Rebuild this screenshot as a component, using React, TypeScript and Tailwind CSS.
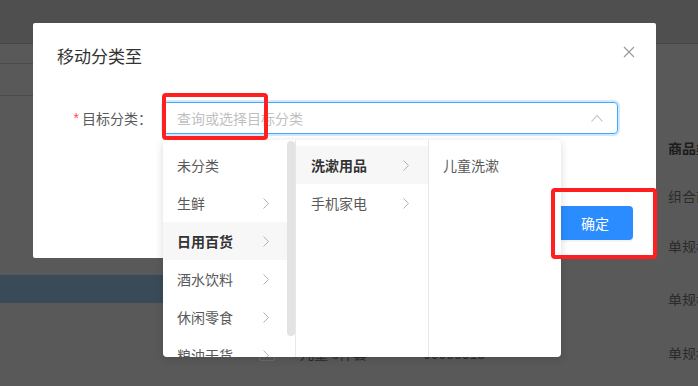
import React from 'react';

const FONT = "font-['Noto_Sans_CJK_SC','Noto_Sans',sans-serif]";

const firstLevel = [
    { name: "未分类", hasChildren: false },
    { name: "生鲜", hasChildren: true },
    { name: "日用百货", hasChildren: true, active: true },
    { name: "酒水饮料", hasChildren: true },
    { name: "休闲零食", hasChildren: true },
    { name: "粮油干货", hasChildren: true },
];

const secondLevel = [
    { name: "洗漱用品", hasChildren: true, active: true },
    { name: "手机家电", hasChildren: true },
];

const tableRows = [
    { name: "", code: "", type: "组合商品", h: "h-[48px]" },
    { name: "", code: "", type: "单规格商品", h: "h-[52px]" },
    { name: "", code: "", type: "单规格商品", h: "h-[54px]" },
    { name: "儿童 6件套", code: "00000013", type: "单规格商品", h: "h-[54px]" },
];

function ChevronRight() {
    return (
        <svg width="6" height="11" viewBox="0 0 6 11" fill="none">
            <polyline points="0.5,0.5 5.5,5.5 0.5,10.5" stroke="#b3b3b3" strokeWidth="1" />
        </svg>
    );
}

function MenuItem({ name, hasChildren, active, pad }: { name: string; hasChildren?: boolean; active?: boolean; pad: string }) {
    return (
        <div
            className={`flex h-[38px] items-center justify-between ${pad} ${active ? "bg-[#f7f7f7] font-semibold text-[#333]" : "text-[#595959]"}`}
        >
            <span className="text-[14px] leading-none">{name}</span>
            {hasChildren && <ChevronRight />}
        </div>
    );
}

export default function App() {
    return (
        <div className={`relative h-[386px] w-[698px] overflow-hidden bg-[#595959] ${FONT}`}>
            {/* page behind the mask */}
            <div className="flex h-full flex-col">
                <div className="h-[44px] shrink-0 border-b border-[#474747] bg-[#4f4f4f]" />
                <div className="flex flex-1">
                    <aside className="flex w-[210px] shrink-0 flex-col">
                        <div className="h-[20px] border-b border-[#4b4b4b]" />
                        <div className="h-[32px] border-b border-[#4b4b4b]" />
                        <div className="mt-[179px] h-[28px] bg-[#394b59]" />
                    </aside>
                    <main className="flex-1 pt-[80px] text-[14px] leading-none text-[#2b2b2b]">
                        <div className="flex h-[48px] items-center font-semibold text-[#1c1c1c]">
                            <div className="w-[90px] pl-[49px]" />
                            <div className="w-[123px]">商品名称</div>
                            <div className="w-[245px]">商品编码</div>
                            <div className="flex-1 overflow-hidden whitespace-nowrap">商品类型</div>
                        </div>
                        {tableRows.map((row, i) => (
                            <div key={i} className={`flex items-center ${row.h}`}>
                                <div className="w-[90px] pl-[49px]">
                                    <div className="h-[16px] w-[16px] rounded-[2px] border border-[#6b6b6b]" />
                                </div>
                                <div className="w-[123px] whitespace-nowrap">{row.name}</div>
                                <div className="w-[245px]">{row.code}</div>
                                <div className="flex-1 overflow-hidden whitespace-nowrap">{row.type}</div>
                            </div>
                        ))}
                    </main>
                </div>
            </div>

            {/* modal */}
            <div className="absolute left-[33px] top-[23px] flex h-[235px] w-[623px] flex-col rounded-[2px] bg-white">
                <div className="flex items-start justify-between pl-[24px] pr-[21px] pt-[22px]">
                    <h2 className="text-[17px] leading-[22px] text-[#333]">移动分类至</h2>
                    <button className="mt-[1px]">
                        <svg width="12" height="12" viewBox="0 0 12 12">
                            <path d="M1 1L11 11M11 1L1 11" stroke="#9a9a9a" strokeWidth="1.2" />
                        </svg>
                    </button>
                </div>

                <div className="mt-[35px] flex items-center pl-[24px]">
                    <label className="flex w-[106px] items-center justify-end pr-[11px] text-[14px] leading-none text-[#595959]">
                        <span className="mr-[3px] font-['Liberation_Sans',sans-serif] text-[#ff4d4f]">*</span>
                        目标分类：
                    </label>
                    <div className="flex h-[32px] w-[455px] items-center justify-between rounded-[4px] border border-[#40a9ff] pl-[13px] pr-[14px] shadow-[0_0_0_2px_rgba(24,144,255,0.2)]">
                        <span className="text-[14px] leading-none text-[#bfbfbf]">查询或选择目标分类</span>
                        <svg width="12" height="8" viewBox="0 0 12 8" fill="none">
                            <polyline points="0.5,7.5 6,1.5 11.5,7.5" stroke="#bfbfbf" strokeWidth="1.1" />
                        </svg>
                    </div>
                </div>

                <div className="mt-auto flex justify-end pb-[18px] pr-[23px]">
                    <button className="h-[34px] w-[76px] rounded-[4px] bg-[#2b8cff] text-[14px] leading-none text-white shadow-[0_2px_0_rgba(0,0,0,0.04)]">
                        确定
                    </button>
                </div>
            </div>

            {/* cascader dropdown */}
            <div className="absolute left-[163px] top-[140px] flex h-[217px] w-[398px] overflow-hidden rounded-[4px] bg-white shadow-[0_2px_8px_rgba(0,0,0,0.15)]">
                <div className="flex w-[133px] border-r border-[#e8e8e8]">
                    <div className="w-[124px] pt-[6px]">
                        {firstLevel.map((item) => (
                            <MenuItem key={item.name} {...item} pad="pl-[14px] pr-[18px]" />
                        ))}
                    </div>
                    <div className="w-[8px]">
                        <div className="mt-[1px] h-[195px] rounded-full bg-[#e3e3e3]" />
                    </div>
                </div>
                <div className="w-[133px] border-r border-[#e8e8e8] pt-[6px]">
                    {secondLevel.map((item) => (
                        <MenuItem key={item.name} {...item} pad="pl-[15px] pr-[19px]" />
                    ))}
                </div>
                <div className="flex-1 pt-[6px]">
                    <MenuItem name="儿童洗漱" pad="pl-[14px]" />
                </div>
            </div>

            {/* annotation boxes */}
            <div className="pointer-events-none absolute left-[162px] top-[93px] h-[47px] w-[106px] rounded-[4px] border-4 border-[#ff1f1f]" />
            <div className="pointer-events-none absolute left-[551px] top-[188px] h-[71px] w-[106px] rounded-[4px] border-4 border-[#ff1f1f]" />
        </div>
    );
}
